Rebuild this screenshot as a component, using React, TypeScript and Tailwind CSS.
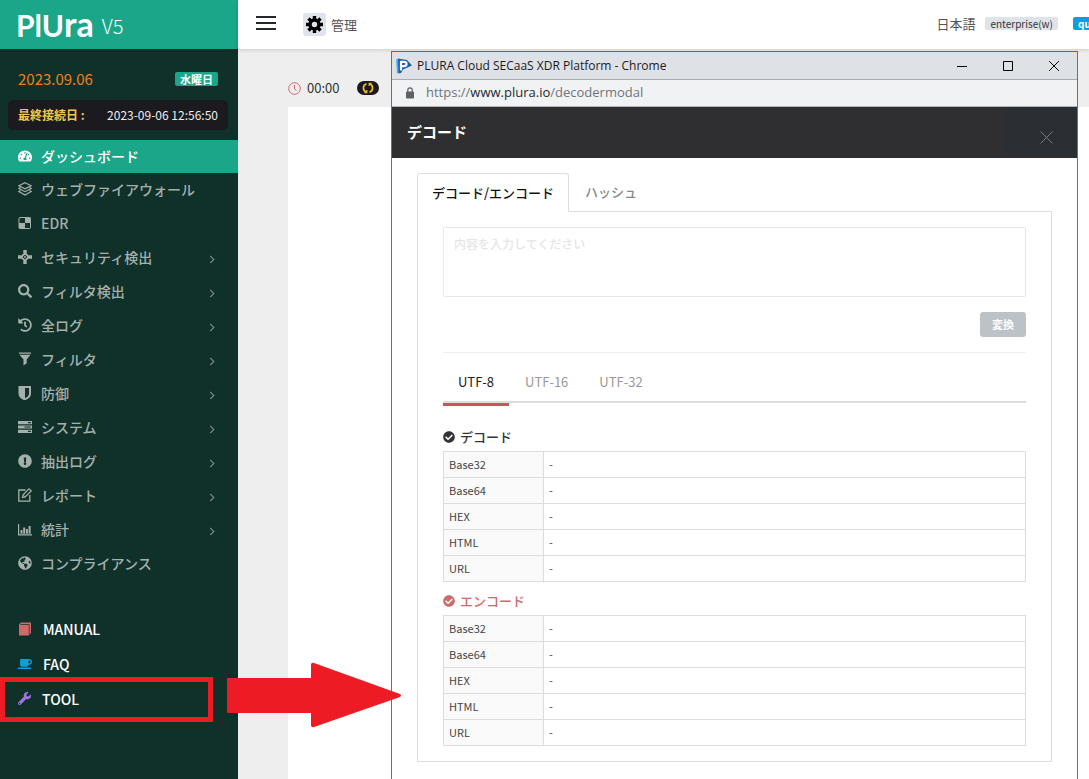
import { useState, type ReactNode } from "react";
import {
  FaCoffee,
  FaExclamationCircle,
  FaGlobeAmericas,
  FaHistory,
  FaSearch,
  FaTachometerAlt,
  FaWrench,
  FaCheckCircle,
} from "react-icons/fa";

type IconProps = { children: ReactNode };

function Glyph({ children }: IconProps) {
  return (
    <svg viewBox="0 0 14 14" className="size-[14px]" fill="none" stroke="currentColor" aria-hidden="true">
      {children}
    </svg>
  );
}

const layersIcon = (
  <Glyph>
    <path d="M7 .7 13.2 3.8 7 6.9.8 3.8Z" strokeWidth="1.2" />
    <path d="M2.6 5.600.8 6.600 7 9.700l6.2-3.1-1.8-1" strokeWidth="1.2" />
    <path d="M2.6 8.500.8 9.500 7 13l6.200-3.500-1.800-1" strokeWidth="1.2" />
  </Glyph>
);

const checkerIcon = (
  <Glyph>
    <rect x="1" y="1.5" width="11.500" height="11" rx="1" />
    <path d="M7 1.500h5.500V7H7zM1 7h6v5.500H1z" fill="currentColor" stroke="none" />
  </Glyph>
);

const targetIcon = (
  <Glyph>
    <path
      d="M5.300 0h3.400v3L7 4.500 5.300 3zM5.300 14h3.400v-3L7 9.500 5.300 11zM0 5.300v3.400h3L4.500 7 3 5.300zM14 5.300v3.400h-3L9.500 7 11 5.300z"
      fill="currentColor"
      stroke="none"
    />
    <path d="M7 3.200 10.800 7 7 10.800 3.200 7Z" strokeWidth="1.800" />
    <circle cx="7" cy="7" r="1" fill="currentColor" stroke="none" />
  </Glyph>
);

const funnelIcon = (
  <Glyph>
    <path d="M1 .5h12v1.300H1zM1.500 2.800h11L8.700 7.500v3.700L5.500 13.500v-6z" fill="currentColor" stroke="none" />
  </Glyph>
);

const shieldIcon = (
  <Glyph>
    <path
      d="M.5 0h12.500v8c0 3-2.800 5-6.250 6.500C3.300 13 .5 11 .5 8zM7 2v10.300c2.500-1.200 4-2.500 4-4.800V2z"
      fill="currentColor"
      fillRule="evenodd"
      stroke="none"
    />
  </Glyph>
);

const serverIcon = (
  <Glyph>
    <path
      d="M0 1h14v3.200H0zM0 5.400h14v3.200H0zM0 9.800h14V13H0zM10 2v1.200h2.800V2zM6.500 6.400v1.200h6.300V6.400zM10 10.800V12h2.800v-1.200z"
      fill="currentColor"
      fillRule="evenodd"
      stroke="none"
    />
  </Glyph>
);

const editIcon = (
  <Glyph>
    <path d="M7.500 2H.8v11.200h11V7" strokeWidth="1.3" />
    <path d="m4.500 9.500.6-2.700L11 .9l2.200 2-6 6z" strokeWidth="1.2" />
    <path d="m5.200 7 1.900 1.800" />
  </Glyph>
);

const chartIcon = (
  <Glyph>
    <path d="M.6 2v10.800H14" strokeWidth="1.2" />
    <path d="M2.500 8h2v3.700h-2zM5.200 5.500h2v6.200h-2zM7.900 7h2v4.700h-2zM10.600 4h2v7.700h-2z" fill="currentColor" stroke="none" />
  </Glyph>
);

const menu: { label: string; icon: ReactNode; expandable?: boolean }[] = [
  { label: "ウェブファイアウォール", icon: layersIcon },
  { label: "EDR", icon: checkerIcon },
  { label: "セキュリティ検出", icon: targetIcon, expandable: true },
  { label: "フィルタ検出", icon: <FaSearch />, expandable: true },
  { label: "全ログ", icon: <FaHistory />, expandable: true },
  { label: "フィルタ", icon: funnelIcon, expandable: true },
  { label: "防御", icon: shieldIcon, expandable: true },
  { label: "システム", icon: serverIcon, expandable: true },
  { label: "抽出ログ", icon: <FaExclamationCircle />, expandable: true },
  { label: "レポート", icon: editIcon, expandable: true },
  { label: "統計", icon: chartIcon, expandable: true },
  { label: "コンプライアンス", icon: <FaGlobeAmericas /> },
];

function Sidebar() {
  return (
    <aside className="flex w-[238px] shrink-0 flex-col bg-[#10302a]">
      <a href="#home" className="flex h-[49px] items-center gap-2 bg-[#1aa688] pl-4 text-white">
        <span className="flex items-baseline font-['Lato'] text-[30px] leading-[48px] font-bold">
          <span>PlU</span>
          <span className="text-[34px]">ra</span>
        </span>
        <span className="pt-[2px] text-xl font-light">V5</span>
      </a>

      <div className="flex items-center justify-between pt-5 pr-5 pb-3 pl-[18px]">
        <span className="text-[15px] leading-[19px] text-[#f0801e]">2023.09.06</span>
        <span className="rounded-[2px] bg-[#1aa688] px-[5px] text-[11px] leading-[14px] font-bold text-white">水曜日</span>
      </div>
      <div className="mr-[10px] ml-2 flex h-[30px] items-center justify-between rounded-[5px] bg-[#1a1a1f] px-[10px] text-xs">
        <span className="font-bold text-[#f0c850]">最終接続日 :</span>
        <span className="text-[#eeeeee]">2023-09-06 12:56:50</span>
      </div>

      <nav className="mt-[10px] text-sm font-medium text-[#a5b0ad]">
        <a href="#dashboard" className="flex h-[33px] items-center gap-[9px] bg-[#1aa688] pb-[2px] pl-[18px] text-white">
          <FaTachometerAlt className="size-[14px]" />
          ダッシュボード
        </a>
        {menu.map((m) => (
          <a key={m.label} href={`#${m.label}`} className="flex h-[34px] items-center gap-[9px] pr-[23px] pb-[2px] pl-[18px]">
            <span className="flex w-[14px] justify-center">{m.icon}</span>
            <span className="grow">{m.label}</span>
            {m.expandable && (
              <svg viewBox="0 0 6 10" className="mt-1 h-[9px] w-[6px]" fill="none" stroke="#7d8a86" strokeWidth="1.3" aria-hidden="true">
                <path d="m1 1 4 4-4 4" />
              </svg>
            )}
          </a>
        ))}
      </nav>

      <nav className="mt-[31px] text-sm font-medium text-white">
        <a href="#manual" className="flex h-[35px] items-center gap-[11px] pb-[2px] pl-[18px]">
          <svg viewBox="0 0 14 14" className="size-[14px]" aria-hidden="true">
            <path d="M1 2.500 3 .5h10v10.500l-1.500 2V2.300H2.500v.7h8.300V13.500H1z" fill="#d0696a" />
          </svg>
          MANUAL
        </a>
        <a href="#faq" className="flex h-[35px] items-center gap-[11px] pb-[2px] pl-[18px]">
          <FaCoffee className="size-[14px] text-[#0c9fdb]" />
          FAQ
        </a>
        <a href="#tool" className="relative flex h-[35px] items-center gap-[11px] pb-[2px] pl-[18px]">
          <FaWrench className="size-[13px] text-[#a374e0]" />
          TOOL
          <span className="absolute -top-[5px] left-0 h-[45px] w-[213px] border-5 border-[#ed1c24]" />
        </a>
      </nav>
    </aside>
  );
}

function TopBar() {
  return (
    <header className="relative flex h-[49px] items-center bg-white pl-[18px] text-[13px] text-[#555555] shadow-[0_1px_4px_rgba(0,0,0,0.15)]">
      <button type="button" aria-label="Menu" className="flex w-5 flex-col gap-1 pb-[3px]">
        <span className="h-[2px] bg-[#22262e]" />
        <span className="h-[2px] bg-[#22262e]" />
        <span className="h-[2px] bg-[#22262e]" />
      </button>
      <a href="#admin" className="ml-[27px] flex items-center gap-[5px]">
        <span className="flex size-[23px] items-center justify-center rounded-[3px] bg-[#dfe3ea]">
          <svg viewBox="0 0 18 18" className="size-[17px]" fill="none" stroke="#000000" aria-hidden="true">
            <circle cx="9" cy="9" r="4.700" strokeWidth="3.600" />
            <path
              d="M9 0v3.500M9 14.500V18M0 9h3.500M14.500 9H18M2.640 2.640l2.500 2.500M12.860 12.860l2.500 2.500M15.360 2.640l-2.500 2.500M5.140 12.860l-2.500 2.500"
              strokeWidth="3.600"
            />
          </svg>
        </span>
        管理
      </a>
      <div className="ml-auto flex shrink-0 items-center gap-[10px] pb-[2px] whitespace-nowrap">
        <a href="#language">日本語</a>
        <span className="rounded-[2px] bg-[#dfe3ea] px-[5px] text-[10px] leading-[13px] text-[#333333]">enterprise(w)</span>
        <span className="ml-[5px] w-4 rounded-l-[2px] bg-[#0c9fdb] pl-[5px] text-[10px] leading-[13px] font-bold text-white">
          qu
        </span>
      </div>
    </header>
  );
}

const formats = ["Base32", "Base64", "HEX", "HTML", "URL"];

function ResultTable({ label }: { label: string }) {
  return (
    <table aria-label={label} className="w-full table-fixed border-collapse text-left text-[11px] text-[#444444]">
      <colgroup>
        <col className="w-[100px]" />
        <col />
      </colgroup>
      <tbody>
        {formats.map((f) => (
          <tr key={f} className="h-[26px]">
            <th scope="row" className="border border-[#dddddd] bg-[#fafafa] px-[5px] pb-px font-normal">
              {f}
            </th>
            <td className="border border-[#dddddd] px-[5px] pb-px">-</td>
          </tr>
        ))}
      </tbody>
    </table>
  );
}

function DecoderWindow() {
  const [tab, setTab] = useState("UTF-8");
  return (
    <section
      aria-label="デコード"
      className="absolute top-[51px] right-[11px] bottom-0 left-[153px] z-10 flex flex-col overflow-hidden border-x border-t border-x-[#6f6f6f] border-t-[#1f78c8] bg-white"
    >
      <div className="flex h-7 shrink-0 items-center border-b border-[#a9adb3] bg-[#dee1e6] pl-1 font-['Open_Sans','Noto_Sans',sans-serif] text-xs text-[#1c1c1c]">
        <svg viewBox="0 0 16 16" className="size-4" aria-hidden="true">
          <path d="M0 1.500 2.500.5 5 14l-4 1.500z" fill="#45b4e8" />
          <path d="M2 .5 11 2l5 5.500-9 4-2 3.500-2.500.5z" fill="#1a5cae" />
          <path d="M5 12.500 5 3.800h3.200c3.400.3 3 4.300-.4 4.300H5.500" fill="none" stroke="#ffffff" strokeWidth="2.200" />
        </svg>
        <span className="ml-[5px] grow">PLURA Cloud SECaaS XDR Platform - Chrome</span>
        <div className="flex gap-9 pr-[18px]">
          <button type="button" aria-label="Minimize" className="size-[10px]">
            <svg viewBox="0 0 10 10" stroke="#000000" fill="none"><path d="M0 5.500h10" /></svg>
          </button>
          <button type="button" aria-label="Maximize" className="size-[10px]">
            <svg viewBox="0 0 10 10" stroke="#000000" fill="none"><path d="M.5.5h9v9h-9z" /></svg>
          </button>
          <button type="button" aria-label="Close window" className="size-[10px]">
            <svg viewBox="0 0 10 10" stroke="#000000" fill="none"><path d="m0 0 10 10M10 0 0 10" /></svg>
          </button>
        </div>
      </div>
      <div className="flex h-[27px] shrink-0 items-center border-b border-[#b0b3b6] bg-[#f1f2f4] pl-[14px] font-['Open_Sans','Noto_Sans',sans-serif] text-[13px] text-[#70757a]">
        <svg viewBox="0 0 8 12" className="h-3 w-2" aria-hidden="true">
          <path d="M1.800 5V3a2.200 2.200 0 0 1 4.400 0v2" fill="none" stroke="#5f6368" strokeWidth="1.200" />
          <rect y="4.500" width="8" height="7" rx=".8" fill="#5f6368" />
        </svg>
        <span className="ml-3">
          https://<span className="text-[#26292d]">www.plura.io</span>/decodermodal
        </span>
      </div>

      <div className="flex h-[51px] shrink-0 bg-[#2f2f31] text-white">
        <h1 className="grow pl-[15px] text-[15px] leading-[50px] font-bold">デコード</h1>
        <button type="button" aria-label="閉じる" className="flex w-[73px] items-center justify-center bg-[#2b2e33] pt-[10px] pl-[11px]">
          <svg viewBox="0 0 13 13" className="size-[13px]" stroke="#777b80" fill="none"><path d="m.5.5 12 12M12.500.5l-12 12" /></svg>
        </button>
      </div>

      <div className="px-[25px] pt-[15px]">
        <div className="flex text-[13px] font-medium">
          <button type="button" className="relative z-10 -mb-px h-[39px] rounded-t-[3px] border border-b-0 border-[#dddddd] bg-white px-[14px] text-[#111111]">
            デコード/エンコード
          </button>
          <button type="button" className="h-[38px] px-4 text-[#888888]">
            ハッシュ
          </button>
        </div>
        <div className="border border-[#dddddd] px-[25px] py-[15px]">
          <textarea
            aria-label="内容を入力してください"
            placeholder="内容を入力してください"
            className="block h-[70px] w-full resize-none rounded-[2px] border border-[#e8e8e8] px-[10px] py-2 text-xs font-medium placeholder:text-[#e6e6e6]"
          />
          <div className="flex justify-end border-b border-[#eeeeee] py-[15px]">
            <button type="button" className="h-[25px] rounded-[3px] bg-[#bcc2c6] px-[12px] text-[11px] font-bold text-white">
              変換
            </button>
          </div>

          <div className="mt-[10px] flex h-10 gap-px border-b-2 border-[#dddddd] text-[13px]">
            {["UTF-8", "UTF-16", "UTF-32"].map((t) => (
              <button
                key={t}
                type="button"
                onClick={() => setTab(t)}
                className={
                  t === tab
                    ? "h-[43px] border-b-3 border-[#c75657] px-[15px] pb-[2px] text-[#222222]"
                    : "h-[43px] border-b-3 border-transparent px-[15px] pb-[2px] text-[#999999]"
                }
              >
                {t}
              </button>
            ))}
          </div>

          <h2 className="mt-6 mb-1 flex items-center gap-[5px] text-[13px] leading-5 font-medium text-[#333333]">
            <FaCheckCircle className="size-3" />
            デコード
          </h2>
          <ResultTable label="デコード" />
          <h2 className="mt-[9px] mb-1 flex items-center gap-[5px] text-[13px] leading-5 font-medium text-[#cd6a6b]">
            <FaCheckCircle className="size-3" />
            エンコード
          </h2>
          <ResultTable label="エンコード" />
        </div>
      </div>
    </section>
  );
}

export default function App() {
  return (
    <div className="relative flex min-h-screen overflow-hidden bg-[#eeeeee] font-['Noto_Sans_CJK_JP',sans-serif]">
      <Sidebar />
      <main className="relative flex min-w-0 grow flex-col">
        <TopBar />
        <div className="flex h-[58px] items-center gap-[6px] pt-5 pl-[50px] text-[13px] text-[#333333]">
          <svg viewBox="0 0 13 13" className="size-[13px]" fill="none" stroke="#d0696a" aria-hidden="true">
            <circle cx="6.500" cy="6.500" r="5.800" />
            <path d="M6.500 3v4l2 1.500" />
          </svg>
          00:00
          <button type="button" aria-label="Refresh" className="ml-3 flex h-[14px] w-[22px] items-center justify-center rounded-full bg-[#1a1a1f]">
            <svg viewBox="0 0 12 12" className="size-3" fill="none" stroke="#f0c030" strokeWidth="1.700" aria-hidden="true">
              <path d="M4.500 1.800C.5 3 .5 8.500 4 10M7.500 10.200c4-1.200 4-6.700.5-8.200" />
              <path d="M2.500 10.600h2.300V8M9.500 1.400H7.200V4" strokeWidth="1.200" />
            </svg>
          </button>
        </div>
        <div className="ml-[50px] grow bg-white" />
        <DecoderWindow />
      </main>
      <svg viewBox="0 0 174 66" className="absolute top-[662px] left-[227px] z-20 h-[66px] w-[174px]" aria-hidden="true">
        <path d="M1 16h83V3q0-3 3-2l86 31q2 1.500 0 3L87 65q-3 1-3-2V51H1q-1 0-1-1V17q0-1 1-1z" fill="#ed1c24" />
      </svg>
    </div>
  );
}
